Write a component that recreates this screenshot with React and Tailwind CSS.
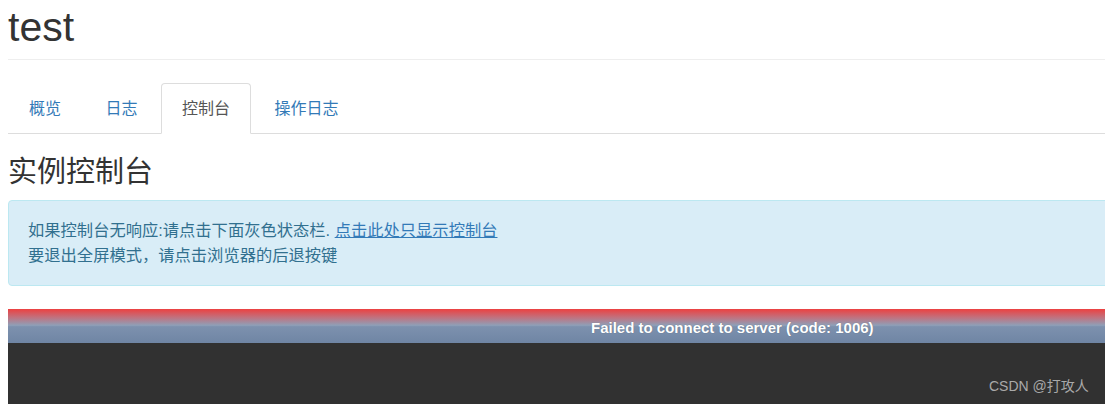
import React from 'react';

const tabs = ['概览', '日志', '控制台', '操作日志'];

export default function App() {
    return (
        <div
            className="relative w-[1105px] h-[404px] overflow-hidden bg-white text-[#333]"
            style={{ fontFamily: '"Liberation Sans", "Noto Sans CJK SC", sans-serif' }}
        >
            <div className="w-[1200px] pl-2">
                <h1 className="pt-[5px] pb-[10px] text-[41px] leading-[44px] border-b border-[#eee]">test</h1>

                <ul className="mt-[23px] flex border-b border-[#ddd] text-[16px]">
                    {tabs.map((t, i) => (
                        <li key={t} className="mr-[2.5px] -mb-px">
                            <a
                                href="#"
                                className={
                                    i === 2
                                        ? 'block px-5 py-[11px] leading-[27px] rounded-t-[4px] border border-[#ddd] border-b-white bg-white text-[#555]'
                                        : 'block px-5 py-[11px] leading-[27px] rounded-t-[4px] border border-transparent text-[#337ab7]'
                                }
                            >
                                {t}
                            </a>
                        </li>
                    ))}
                </ul>

                <h3 className="mt-[22px] mb-[12px] text-[29px] leading-[32px] text-[#333]">实例控制台</h3>

                <div className="rounded-[4px] border border-[#bce8f1] bg-[#d9edf7] py-[17px] pl-[19px] text-[16.3px] leading-[25px] text-[#31708f]">
                    <div>
                        如果控制台无响应:请点击下面灰色状态栏.{' '}
                        <a href="#" className="text-[#337ab7] underline">点击此处只显示控制台</a>
                    </div>
                    <div>要退出全屏模式，请点击浏览器的后退按键</div>
                </div>

                <div className="mt-[23px] bg-[#313131] h-[120px]">
                    <div className="h-[34px] bg-[linear-gradient(to_bottom,#ec4141_0%,#c0727f_25%,#8f9fb7_48%,#7d91ae_52%,#6f85a4_100%)] pl-[583px] pt-[9px] text-[15px] leading-[20px] font-bold text-white [text-shadow:0_0_1px_rgba(0,0,0,0.3)]">
                        Failed to connect to server (code: 1006)
                    </div>
                </div>
            </div>

            <div className="absolute left-[989px] top-[376px] text-[14px] leading-[20px] text-[#a9a9a9]">CSDN @打攻人</div>
        </div>
    );
}
